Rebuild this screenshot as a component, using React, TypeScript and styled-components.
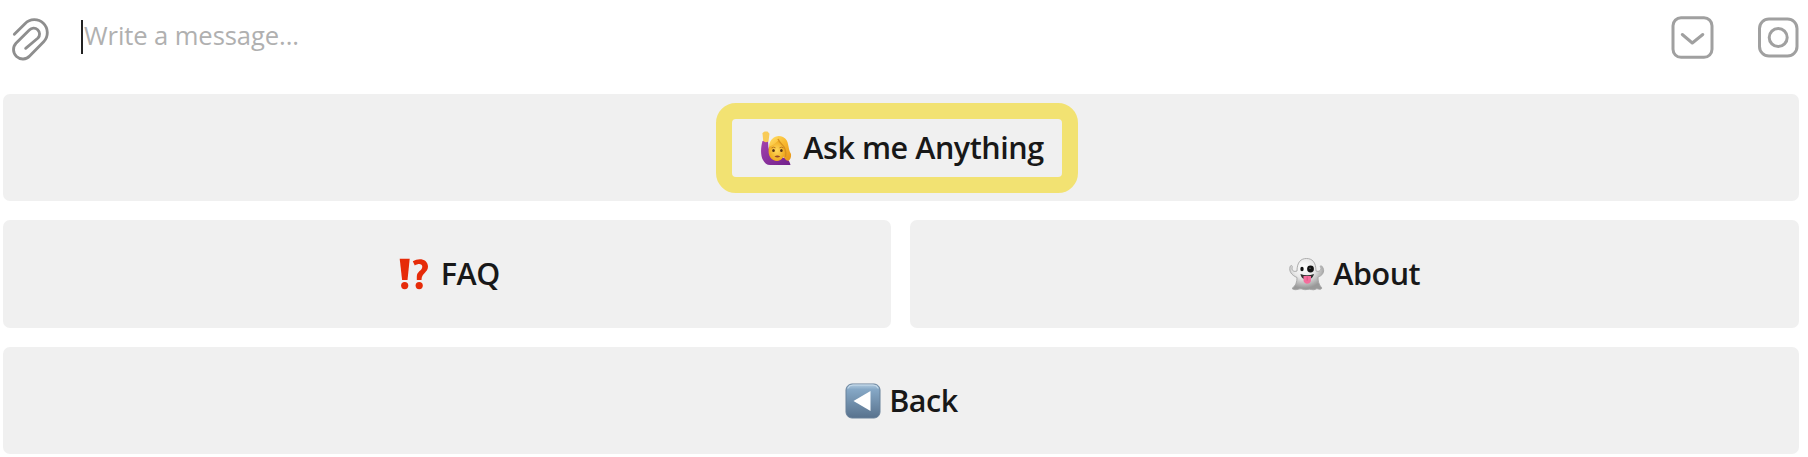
import React from 'react';
import styled, { createGlobalStyle } from 'styled-components';

const GlobalStyle = createGlobalStyle`
  body { margin: 0; background: #fff; font-family: "Open Sans", sans-serif; }
  * { box-sizing: border-box; }
`;

const Panel = styled.main`
  width: 1808px;
  height: 457px;
  overflow: hidden;
  background: #fff;
`;

const Composer = styled.header`
  display: flex;
  align-items: flex-start;
  height: 93.5px;
  padding: 0 9px 0 11px;
  svg { display: block; flex: none; }
`;

const Clip = styled.svg`
  margin-top: 18px;
`;

const MessageField = styled.div`
  flex: 1;
  margin: 20px 0 0 31px;
  height: 34px;
  border-left: 2px solid #222;
  padding-left: 1px;
  font-size: 25.6px;
  line-height: 31px;
  letter-spacing: -0.1px;
  color: #b0b0b0;
  white-space: nowrap;
`;

const Actions = styled.div`
  display: flex;
  gap: 44px;
  padding-top: 15px;
`;

const Keyboard = styled.section`
  display: grid;
  gap: 19px;
  padding: 0 9px 0 3px;
`;

const KeyRow = styled.div<{ $columns?: string }>`
  display: grid;
  grid-template-columns: ${p => p.$columns ?? '1fr'};
  gap: 19px;
`;

const Key = styled.button<{ $shift?: number }>`
  display: flex;
  align-items: center;
  justify-content: center;
  position: relative;
  height: 107.5px;
  padding: 0 0 0 ${p => p.$shift ?? 0}px;
  border: 0;
  border-radius: 7px;
  background: #f0f0f0;
  color: #181818;
  font: 600 30.5px/42px "Open Sans", sans-serif;
  letter-spacing: -0.45px;
  white-space: nowrap;
  svg { display: block; flex: none; margin-top: 1px; }
`;

const Label = styled.span<{ $gap: number }>`
  margin-left: ${p => p.$gap}px;
  margin-top: -1px;
`;

const Highlight = styled.span`
  position: absolute;
  left: 713px;
  top: 9.5px;
  width: 362px;
  height: 90px;
  border: 16px solid #f2e272;
  border-radius: 20px;
`;

const ClipIcon = () => (
  <Clip width="39" height="43" viewBox="33 53 117 129" fill="none" stroke="#8e8e8e" strokeWidth="8.5" strokeLinecap="round" strokeLinejoin="round">
    <path d="M43 102 75 70A38.5 38.5 0 0 1 131 124L89 167A27.5 27.5 0 0 1 48 129L88 89A17.5 17.5 0 0 1 114 113L77 144" />
  </Clip>
);

const CommandIcon = () => (
  <svg width="43" height="44" viewBox="0 0 43 44" fill="none" stroke="#a0a0a0" strokeWidth="3" strokeLinecap="round" strokeLinejoin="round">
    <rect x="2" y="2.8" width="39" height="39.5" rx="8" />
    <path d="m11.3 19.5 10 8.5 10.5-8.5" />
  </svg>
);

const CameraIcon = () => (
  <svg width="41" height="44" viewBox="0 0 41 44" fill="none" stroke="#a0a0a0" strokeWidth="3">
    <rect x="1.5" y="4" width="37.5" height="37" rx="9.5" />
    <circle cx="20.2" cy="22.5" r="9" />
  </svg>
);

const RaisedHandIcon = () => (
  <svg width="32" height="36" viewBox="0 0 32 36">
    <defs>
      <linearGradient id="sleeve" x2="1" y2="1"><stop stopColor="#a343ae" /><stop offset="1" stopColor="#71208b" /></linearGradient>
      <linearGradient id="hair" x2=".8" y2="1"><stop stopColor="#ffe16b" /><stop offset=".5" stopColor="#f9b930" /><stop offset="1" stopColor="#e99a1d" /></linearGradient>
      <radialGradient id="face"><stop stopColor="#ffd85b" /><stop offset="1" stopColor="#efaa1f" /></radialGradient>
    </defs>
    <path d="M2.5 11C.5 18 .5 26 3 30c1.5 3 4 5 7 5h20.500c-1-5-4-7-8-7.500L14 28Q8 24 8 11Z" fill="url(#sleeve)" />
    <path d="M3.200 11 2.500 3.500C3 1.800 5 1.200 7.500 1.600L9.500 3.800 8.500 11.500Q5 13 3.200 11Z" fill="#f8cb58" />
    <path d="M9 16C10 8 17 4 23 7c7 4 4 10 8 17 .5 5-2 8-5 6l-5-6-12-6Z" fill="url(#hair)" />
    <path d="M9 17c4-2 7-4 10-7 1 4 4 6 6 8 0 8-3 13-8 13S7 26 9 17Z" fill="url(#face)" />
    <path d="M18 9c2 5 6 6 7 10q1.500 4 .5 8" fill="none" stroke="#d9921f" strokeWidth="1.400" />
    <path d="M11.500 18q2-1.500 4-.2m4 0q2-1.300 4 .2" fill="none" stroke="#ad681e" strokeWidth=".8" />
    <ellipse cx="13.500" cy="20.500" rx="1.300" ry="1.600" fill="#533018" /><ellipse cx="21.400" cy="20.500" rx="1.300" ry="1.600" fill="#533018" />
    <path d="M14.500 26.500q2.700-2 5.800 0-2.800 2-5.800 0" fill="#9b4928" />
  </svg>
);

const InterrobangIcon = () => (
  <svg width="30" height="32" viewBox="0 0 30 32" fill="#e62b08">
    <path d="M.7.800h10L8.500 22H3.100Z" /><circle cx="5.700" cy="27.600" r="3.600" />
    <path d="M13.800 3.200C20-.8 29 1 29 8.500c0 6-6.500 6.500-6.500 13.500h-4.700v-3.500c0-5 5.500-6 5.500-9.700 0-3.500-4.300-3.400-7.500-1.300Z" /><circle cx="20.200" cy="27.600" r="3.600" />
  </svg>
);

const GhostIcon = () => (
  <svg width="36" height="34" viewBox="0 0 36 34">
    <defs><radialGradient id="ghost" cx=".42" cy=".3" r=".65"><stop stopColor="#fff" /><stop offset=".5" stopColor="#e8e8e8" /><stop offset="1" stopColor="#999" /></radialGradient></defs>
    <path d="M8 14C8 5 12 1.500 17.500 1.500S27 5 27 14c3 1 5-.5 5-3-2-3 1-3 2 0 2 4-1 8-5 9 0 6 2 9 4 11-2 3-4 0-6 1-3 2-5-.5-9 .5-3 1-5-1.500-8-.5-3 1-5 1-7-.5 4-3 5-7 5-11C2 18 0 14 1 10c1-3 3-1 2 1 0 3 2 4 5 3Z" fill="url(#ghost)" stroke="#a5a5a5" strokeWidth=".9" />
    <ellipse cx="13" cy="12" rx="1.700" ry="2.200" fill="#111" /><circle cx="21.500" cy="12" r="3.400" fill="#111" /><circle cx="21" cy="11.200" r=".7" fill="#777" />
    <path d="M11.500 17q6.500 2.500 13.500 0-1 4-4 5h-6q-3-1-3.500-5" fill="#303030" />
    <path d="M14.500 19H22v4c0 5-7.500 5-7.500 0Z" fill="#f56d9c" /><path d="M18.200 19.500v4" stroke="#d8477d" strokeWidth=".8" />
  </svg>
);

const BackIcon = () => (
  <svg width="36" height="36" viewBox="0 0 36 36">
    <defs><linearGradient id="back" x2="0" y2="1"><stop stopColor="#b5cee2" /><stop offset=".16" stopColor="#86a8c6" /><stop offset="1" stopColor="#58728d" /></linearGradient></defs>
    <rect x="1" y="1" width="34" height="34" rx="6" fill="url(#back)" stroke="#68819a" strokeWidth="1" />
    <path d="M3 5.5q1-3.500 5-3.500h20q4 0 5 3.500" fill="none" stroke="#c8dbea" strokeWidth="1" />
    <path d="m8.500 18 17-10v20Z" fill="#fff" />
  </svg>
);

export default function App() {
  return (
    <>
      <GlobalStyle />
      <Panel>
        <Composer>
          <ClipIcon />
          <MessageField>Write a message...</MessageField>
          <Actions><CommandIcon /><CameraIcon /></Actions>
        </Composer>
        <Keyboard>
          <KeyRow>
            <Key $shift={2}><RaisedHandIcon /><Label $gap={11}>Ask me Anything</Label><Highlight /></Key>
          </KeyRow>
          <KeyRow $columns="887.5px 1fr">
            <Key $shift={5}><InterrobangIcon /><Label $gap={12}>FAQ</Label></Key>
            <Key $shift={1}><GhostIcon /><Label $gap={8}>About</Label></Key>
          </KeyRow>
          <KeyRow><Key $shift={1}><BackIcon /><Label $gap={8}>Back</Label></Key></KeyRow>
        </Keyboard>
      </Panel>
    </>
  );
}
